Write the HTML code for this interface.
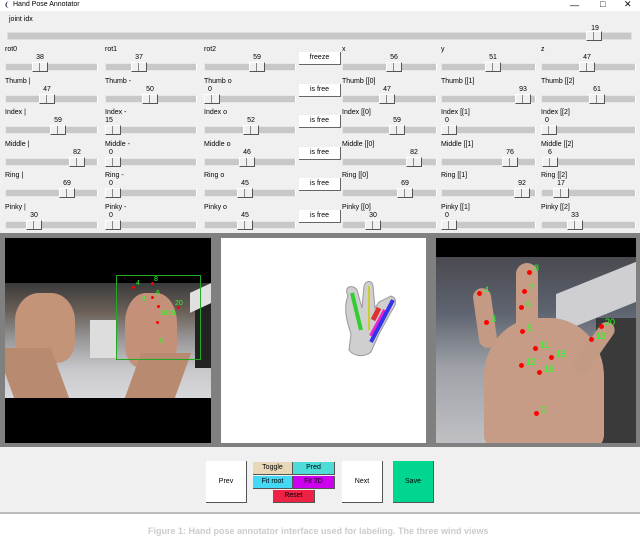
<!DOCTYPE html>
<html><head><meta charset="utf-8"><style>
*{margin:0;padding:0;box-sizing:border-box}
body{width:640px;height:531px;background:#fff;font-family:"Liberation Sans",sans-serif;font-size:7px;color:#000;position:relative;overflow:hidden}
.win{position:absolute;left:0;top:0;width:640px;height:514px;background:#f0f0f0;border-bottom:2px solid #bdbdbd}
.a{position:absolute}
.s{position:absolute;width:95px;height:30px}
.l{position:absolute;left:0;top:2px;white-space:nowrap}
.v{position:absolute;top:10px;width:40px;text-align:center}
.t{position:absolute;left:0;top:19px;width:100%;height:8px;background:#c8c8c8;border:1px solid #e8e8e8;border-right-color:#fff}
.k{position:absolute;top:18px;width:16px;height:10px;background:#f0f0f0;border:1px solid #fff;border-right:1px solid #555;border-bottom:1px solid #555}
.k:after{content:"";position:absolute;left:6px;top:0;width:1px;height:8px;background:#888}
.b{position:absolute;left:299px;width:42px;height:13px;background:#fff;border-right:1px solid #666;border-bottom:1px solid #666;text-align:center;line-height:12px;font-size:7px}
.dot{position:absolute;width:5px;height:5px;border-radius:50%;background:#f00}
.g{position:absolute;color:#2f2;font-size:9px}
.bb{position:absolute;text-align:center;font-size:7px;border-right:1px solid #555;border-bottom:1px solid #555}
</style></head><body>
<div class="win">
<div class="a" style="left:0;top:0;width:640px;height:11px;background:#fff"></div>
<div class="a" style="left:4px;top:1px;font-size:7px;color:#336">&#10088;</div>
<div class="a" style="left:13px;top:1px;font-size:7px">Hand Pose Annotator</div>
<div class="a" style="left:570px;top:0;font-size:9px">&#8212;</div>
<div class="a" style="left:600px;top:-1px;font-size:9px">&#9633;</div>
<div class="a" style="left:624px;top:-1px;font-size:9px">&#10005;</div>
<div class="a" style="left:9px;top:16px">joint idx</div>
<div class="a" style="left:580px;top:25px;width:30px;text-align:center">19</div>
<div class="a" style="left:7px;top:32px;width:625px;height:8px;background:#c8c8c8;border:1px solid #e0e0e0"></div>
<div class="k" style="left:586px;top:31px"></div>

<div class="s" style="left:5px;top:44px;width:93px"><div class="l">rot0</div><div class="v" style="left:15px">38</div><div class="t"></div><div class="k" style="left:27px"></div></div>
<div class="s" style="left:105px;top:44px;width:92px"><div class="l">rot1</div><div class="v" style="left:14px">37</div><div class="t"></div><div class="k" style="left:26px"></div></div>
<div class="s" style="left:204px;top:44px;width:92px"><div class="l">rot2</div><div class="v" style="left:33px">59</div><div class="t"></div><div class="k" style="left:45px"></div></div>
<div class="b" style="top:52px">freeze</div>
<div class="s" style="left:342px;top:44px"><div class="l">x</div><div class="v" style="left:32px">56</div><div class="t"></div><div class="k" style="left:44px"></div></div>
<div class="s" style="left:441px;top:44px"><div class="l">y</div><div class="v" style="left:32px">51</div><div class="t"></div><div class="k" style="left:44px"></div></div>
<div class="s" style="left:541px;top:44px"><div class="l">z</div><div class="v" style="left:26px">47</div><div class="t"></div><div class="k" style="left:38px"></div></div>

<div class="s" style="left:5px;top:76px;width:93px"><div class="l">Thumb |</div><div class="v" style="left:22px">47</div><div class="t"></div><div class="k" style="left:34px"></div></div>
<div class="s" style="left:105px;top:76px;width:92px"><div class="l">Thumb -</div><div class="v" style="left:25px">50</div><div class="t"></div><div class="k" style="left:37px"></div></div>
<div class="s" style="left:204px;top:76px;width:92px"><div class="l">Thumb o</div><div class="v" style="left:-14px">0</div><div class="t"></div><div class="k" style="left:0"></div></div>
<div class="b" style="top:84px">is free</div>
<div class="s" style="left:342px;top:76px"><div class="l">Thumb [[0]</div><div class="v" style="left:25px">47</div><div class="t"></div><div class="k" style="left:37px"></div></div>
<div class="s" style="left:441px;top:76px"><div class="l">Thumb [[1]</div><div class="v" style="left:62px">93</div><div class="t"></div><div class="k" style="left:74px"></div></div>
<div class="s" style="left:541px;top:76px"><div class="l">Thumb [[2]</div><div class="v" style="left:36px">61</div><div class="t"></div><div class="k" style="left:48px"></div></div>

<div class="s" style="left:5px;top:107px;width:93px"><div class="l">Index |</div><div class="v" style="left:33px">59</div><div class="t"></div><div class="k" style="left:45px"></div></div>
<div class="s" style="left:105px;top:107px;width:92px"><div class="l">Index -</div><div class="v" style="left:-16px">15</div><div class="t"></div><div class="k" style="left:0"></div></div>
<div class="s" style="left:204px;top:107px;width:92px"><div class="l">Index o</div><div class="v" style="left:27px">52</div><div class="t"></div><div class="k" style="left:39px"></div></div>
<div class="b" style="top:115px">is free</div>
<div class="s" style="left:342px;top:107px"><div class="l">Index [[0]</div><div class="v" style="left:35px">59</div><div class="t"></div><div class="k" style="left:47px"></div></div>
<div class="s" style="left:441px;top:107px"><div class="l">Index [[1]</div><div class="v" style="left:-14px">0</div><div class="t"></div><div class="k" style="left:0"></div></div>
<div class="s" style="left:541px;top:107px"><div class="l">Index [[2]</div><div class="v" style="left:-14px">0</div><div class="t"></div><div class="k" style="left:0"></div></div>

<div class="s" style="left:5px;top:139px;width:93px"><div class="l">Middle |</div><div class="v" style="left:52px">82</div><div class="t"></div><div class="k" style="left:64px"></div></div>
<div class="s" style="left:105px;top:139px;width:92px"><div class="l">Middle -</div><div class="v" style="left:-14px">0</div><div class="t"></div><div class="k" style="left:0"></div></div>
<div class="s" style="left:204px;top:139px;width:92px"><div class="l">Middle o</div><div class="v" style="left:23px">46</div><div class="t"></div><div class="k" style="left:35px"></div></div>
<div class="b" style="top:147px">is free</div>
<div class="s" style="left:342px;top:139px"><div class="l">Middle [[0]</div><div class="v" style="left:52px">82</div><div class="t"></div><div class="k" style="left:64px"></div></div>
<div class="s" style="left:441px;top:139px"><div class="l">Middle [[1]</div><div class="v" style="left:49px">76</div><div class="t"></div><div class="k" style="left:61px"></div></div>
<div class="s" style="left:541px;top:139px"><div class="l">Middle [[2]</div><div class="v" style="left:-11px">6</div><div class="t"></div><div class="k" style="left:1px"></div></div>

<div class="s" style="left:5px;top:170px;width:93px"><div class="l">Ring |</div><div class="v" style="left:42px">69</div><div class="t"></div><div class="k" style="left:54px"></div></div>
<div class="s" style="left:105px;top:170px;width:92px"><div class="l">Ring -</div><div class="v" style="left:-14px">0</div><div class="t"></div><div class="k" style="left:0"></div></div>
<div class="s" style="left:204px;top:170px;width:92px"><div class="l">Ring o</div><div class="v" style="left:21px">45</div><div class="t"></div><div class="k" style="left:33px"></div></div>
<div class="b" style="top:178px">is free</div>
<div class="s" style="left:342px;top:170px"><div class="l">Ring [[0]</div><div class="v" style="left:43px">69</div><div class="t"></div><div class="k" style="left:55px"></div></div>
<div class="s" style="left:441px;top:170px"><div class="l">Ring [[1]</div><div class="v" style="left:61px">92</div><div class="t"></div><div class="k" style="left:73px"></div></div>
<div class="s" style="left:541px;top:170px"><div class="l">Ring [[2]</div><div class="v" style="left:0px">17</div><div class="t"></div><div class="k" style="left:12px"></div></div>

<div class="s" style="left:5px;top:202px;width:93px"><div class="l">Pinky |</div><div class="v" style="left:9px">30</div><div class="t"></div><div class="k" style="left:21px"></div></div>
<div class="s" style="left:105px;top:202px;width:92px"><div class="l">Pinky -</div><div class="v" style="left:-14px">0</div><div class="t"></div><div class="k" style="left:0"></div></div>
<div class="s" style="left:204px;top:202px;width:92px"><div class="l">Pinky o</div><div class="v" style="left:21px">45</div><div class="t"></div><div class="k" style="left:33px"></div></div>
<div class="b" style="top:210px">is free</div>
<div class="s" style="left:342px;top:202px"><div class="l">Pinky [[0]</div><div class="v" style="left:11px">30</div><div class="t"></div><div class="k" style="left:23px"></div></div>
<div class="s" style="left:441px;top:202px"><div class="l">Pinky [[1]</div><div class="v" style="left:-14px">0</div><div class="t"></div><div class="k" style="left:0"></div></div>
<div class="s" style="left:541px;top:202px"><div class="l">Pinky [[2]</div><div class="v" style="left:14px">33</div><div class="t"></div><div class="k" style="left:26px"></div></div>

<div class="a" style="left:0;top:233px;width:640px;height:214px;background:#808080"></div>
<div class="a" style="left:5px;top:238px;width:206px;height:205px;background:#000;overflow:hidden">
 <div class="a" style="left:0;top:45px;width:206px;height:115px;background:linear-gradient(180deg,#3a3a3a 0%,#6b6058 25%,#9a9a9c 50%,#c8c8cc 75%,#d8d8dc 100%)"></div>
 <div class="a" style="left:190px;top:60px;width:16px;height:70px;background:#222"></div>
 <div class="a" style="left:185px;top:50px;width:21px;height:20px;background:#e0e0e0;transform:skewY(-25deg)"></div>
 <div class="a" style="left:85px;top:82px;width:26px;height:38px;background:#ddd"></div>
 <div class="a" style="left:10px;top:55px;width:60px;height:70px;background:#c49478;border-radius:40% 40% 30% 30%"></div>
 <div class="a" style="left:0px;top:110px;width:55px;height:50px;background:#b88a70;transform:skewX(20deg)"></div>
 <div class="a" style="left:120px;top:55px;width:52px;height:75px;background:#c4907a;border-radius:40% 40% 30% 30%"></div>
 <div class="a" style="left:128px;top:115px;width:50px;height:45px;background:#b88a70;transform:skewX(-20deg)"></div>
 <div class="a" style="left:111px;top:37px;width:85px;height:85px;border:1px solid #2a2"></div>
 <div class="dot" style="left:127px;top:48px;width:3px;height:3px"></div>
 <div class="dot" style="left:146px;top:44px;width:3px;height:3px"></div>
 <div class="dot" style="left:146px;top:58px;width:3px;height:3px"></div>
 <div class="dot" style="left:152px;top:67px;width:3px;height:3px"></div>
 <div class="dot" style="left:172px;top:68px;width:3px;height:3px"></div>
 <div class="dot" style="left:151px;top:83px;width:3px;height:3px"></div>
 <div class="g" style="left:131px;top:42px;font-size:7px">4</div>
 <div class="g" style="left:149px;top:38px;font-size:7px">8</div>
 <div class="g" style="left:151px;top:52px;font-size:7px">6</div>
 <div class="g" style="left:137px;top:58px;font-size:7px">3</div>
 <div class="g" style="left:170px;top:62px;font-size:7px">20</div>
 <div class="g" style="left:155px;top:72px;font-size:7px">1615</div>
 <div class="g" style="left:155px;top:100px;font-size:7px">0</div>
</div>
<div class="a" style="left:221px;top:238px;width:205px;height:205px;background:#fff">
 <svg width="205" height="205" style="position:absolute;left:0;top:0">
  <path d="M127 58 C122 48 132 46 136 52 L141 70 L143 48 C145 42 151 42 152 48 L154 70 L158 64 C162 62 166 60 170 58 C176 60 176 66 170 74 L158 96 L150 114 C143 120 132 118 128 112 L130 96 C126 84 122 70 127 58 Z" fill="#cfcfcf" stroke="#999" stroke-width="1"/>
  <path d="M131 55 L140 92" stroke="#33cc33" stroke-width="4"/>
  <path d="M148 48 L148 92" stroke="#cccc33" stroke-width="2"/>
  <path d="M152 82 L158 70" stroke="#dd3333" stroke-width="5"/>
  <path d="M150 98 L164 72" stroke="#ee22cc" stroke-width="4"/>
  <path d="M150 104 L172 62" stroke="#3333ee" stroke-width="4"/>
 </svg>
</div>
<div class="a" style="left:436px;top:238px;width:200px;height:205px;background:#000;overflow:hidden">
 <div class="a" style="left:0;top:19px;width:200px;height:186px;background:linear-gradient(180deg,#4a4a50 0%,#5e6470 30%,#9fa2a8 60%,#c0c0c4 100%)"></div>
 <div class="a" style="left:120px;top:40px;width:80px;height:40px;background:#cfcfd3;transform:skewY(-22deg)"></div>
 <div class="a" style="left:160px;top:80px;width:40px;height:125px;background:#3a3a3a"></div>
 <div class="a" style="left:40px;top:50px;width:18px;height:60px;background:#c49a84;border-radius:9px;transform:rotate(-8deg)"></div>
 <div class="a" style="left:80px;top:25px;width:22px;height:90px;background:#c69c86;border-radius:11px"></div>
 <div class="a" style="left:48px;top:80px;width:120px;height:130px;background:#c79c86;border-radius:45% 45% 10% 10%"></div>
 <div class="a" style="left:150px;top:80px;width:16px;height:60px;background:#c39a84;border-radius:8px;transform:rotate(35deg)"></div>
 <div class="dot" style="left:41px;top:53px"></div><div class="g" style="left:48px;top:47px">4</div>
 <div class="dot" style="left:91px;top:32px"></div><div class="g" style="left:98px;top:25px">8</div>
 <div class="dot" style="left:86px;top:51px"></div><div class="g" style="left:93px;top:45px">7</div>
 <div class="dot" style="left:83px;top:67px"></div><div class="g" style="left:90px;top:61px">6</div>
 <div class="dot" style="left:48px;top:82px"></div><div class="g" style="left:55px;top:76px">3</div>
 <div class="dot" style="left:84px;top:91px"></div><div class="g" style="left:91px;top:85px">5</div>
 <div class="dot" style="left:163px;top:86px"></div><div class="g" style="left:169px;top:79px">20</div>
 <div class="dot" style="left:153px;top:99px"></div><div class="g" style="left:160px;top:93px">19</div>
 <div class="dot" style="left:97px;top:108px"></div><div class="g" style="left:104px;top:102px">11</div>
 <div class="dot" style="left:113px;top:117px"></div><div class="g" style="left:120px;top:111px">15</div>
 <div class="dot" style="left:83px;top:125px"></div><div class="g" style="left:90px;top:119px">12</div>
 <div class="dot" style="left:101px;top:132px"></div><div class="g" style="left:108px;top:126px">16</div>
 <div class="dot" style="left:98px;top:173px"></div><div class="g" style="left:105px;top:167px">0</div>
</div>

<div class="bb" style="left:206px;top:461px;width:41px;height:42px;background:#fff;line-height:42px">Prev</div>
<div class="bb" style="left:253px;top:462px;width:40px;height:13px;background:#e8d8b8;line-height:12px">Toggle</div>
<div class="bb" style="left:293px;top:462px;width:42px;height:13px;background:#4fdcd8;line-height:12px">Pred</div>
<div class="bb" style="left:253px;top:476px;width:40px;height:13px;background:#44d8f4;line-height:12px">Fit root</div>
<div class="bb" style="left:293px;top:476px;width:42px;height:13px;background:#cc00ee;line-height:12px">Fit 2D</div>
<div class="bb" style="left:273px;top:490px;width:42px;height:13px;background:#ee2244;line-height:12px">Reset</div>
<div class="bb" style="left:342px;top:461px;width:41px;height:42px;background:#fff;line-height:42px">Next</div>
<div class="bb" style="left:393px;top:461px;width:41px;height:42px;background:#00d68f;line-height:42px">Save</div>
</div>
<div class="a" style="left:148px;top:526px;font-size:9px;font-weight:bold;color:#ccc;white-space:nowrap">Figure 1: Hand pose annotator interface used for labeling. The three wind views</div>
</body></html>
